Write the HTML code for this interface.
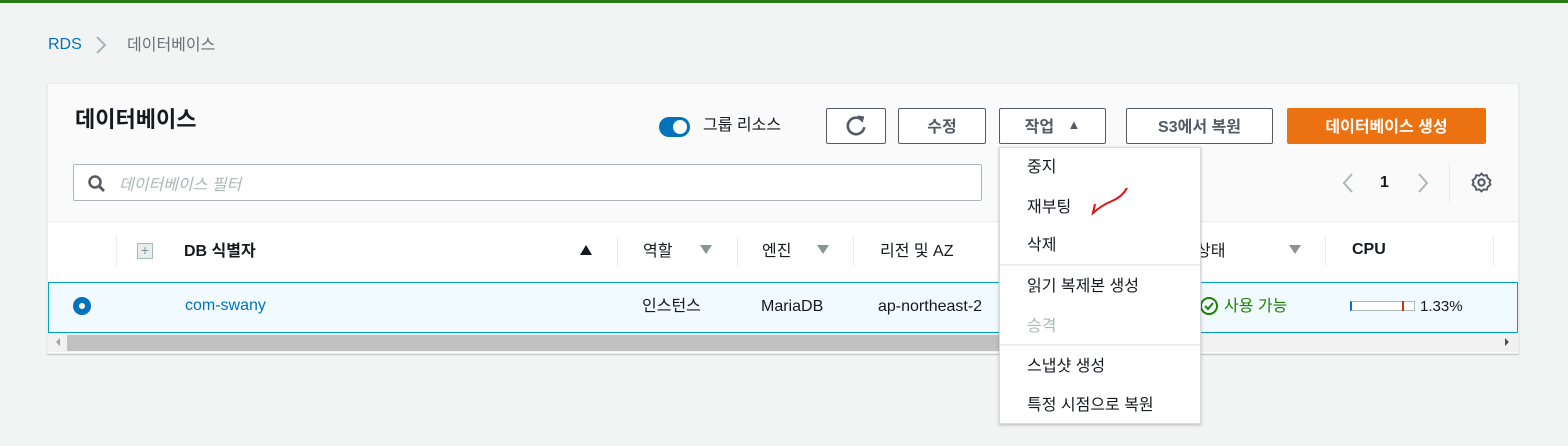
<!DOCTYPE html>
<html><head><meta charset="utf-8"><style>
*{margin:0;padding:0;box-sizing:border-box}
body{width:1568px;height:446px;background:#f2f3f3;font-family:"Liberation Sans","Noto Sans CJK KR",sans-serif;position:relative;overflow:hidden;color:#16191f}
.a{position:absolute;white-space:nowrap}
.btn{position:absolute;top:108px;height:36px;border:1px solid #545b64;background:#fff;border-radius:2px;font-size:16px;font-weight:bold;color:#545b64;display:flex;align-items:center;justify-content:center;padding-bottom:3px}
.hd{font-size:16px;font-weight:bold;color:#16191f;top:237px}
.vl{position:absolute;width:1px;background:#eaeded;top:236px;height:30px}
.tri{position:absolute;top:245px;width:0;height:0;border-left:6px solid transparent;border-right:6px solid transparent;border-top:9px solid #879596}
.dd{font-size:16px;color:#16191f;left:1027px}
</style></head><body>
<div class="a" style="left:0;top:0;width:1568px;height:3px;background:#2d7a1b"></div>
<div class="a" style="left:48px;top:36px;font-size:16px;color:#0073bb">RDS</div>
<svg class="a" style="left:95px;top:36px" width="12" height="18"><path d="M2 1 L10 9 L2 17" fill="none" stroke="#aab7b8" stroke-width="2"/></svg>
<div class="a" style="left:127px;top:31px;font-size:16px;color:#687078">데이터베이스</div>

<div class="a" style="left:47px;top:83px;width:1472px;height:271px;background:#fafafa;border:1px solid #eaeded;box-shadow:0 1px 1px rgba(0,0,0,.2)"></div>
<div class="a" style="left:48px;top:221px;width:1470px;height:1px;background:#eaeded"></div>
<div class="a" style="left:48px;top:222px;width:1470px;height:60px;background:#fff"></div>
<div class="a" style="left:75px;top:102px;font-size:22px;font-weight:bold">데이터베이스</div>
<div class="a" style="left:659px;top:117px;width:31px;height:20px;border-radius:10px;background:#0073bb"></div>
<div class="a" style="left:673px;top:120px;width:14px;height:14px;border-radius:7px;background:#fff"></div>
<div class="a" style="left:703px;top:111px;font-size:16px;color:#16191f">그룹 리소스</div>
<div class="btn" style="left:826px;width:60px;padding-bottom:0"><svg width="24" height="26" viewBox="0 0 20 22"><path d="M15.5 6.5 A7 7 0 1 0 17 12" fill="none" stroke="#545b64" stroke-width="2.2"/><path d="M11 2 L17 3 L15.5 8.5 Z" fill="#545b64"/></svg></div>
<div class="btn" style="left:898px;width:88px">수정</div>
<div class="btn" style="left:999px;width:107px">작업&nbsp;&nbsp;&nbsp;<span style="font-size:13px">▲</span></div>
<div class="btn" style="left:1126px;width:147px">S3에서 복원</div>
<div class="btn" style="left:1287px;width:199px;background:#ec7211;border-color:#ec7211;color:#fff">데이터베이스 생성</div>

<div class="a" style="left:73px;top:164px;width:909px;height:37px;background:#fff;border:1px solid #aab7b8;border-radius:2px"></div>
<svg class="a" style="left:87px;top:174px" width="20" height="20"><circle cx="8" cy="8" r="5.5" fill="none" stroke="#545b64" stroke-width="2.5"/><path d="M12 12 L17 17" stroke="#545b64" stroke-width="2.8"/></svg>
<div class="a" style="left:119px;top:171px;font-size:16px;color:#aab7b8;font-style:italic">데이터베이스 필터</div>

<svg class="a" style="left:1341px;top:172px" width="14" height="22"><path d="M11 2 L3 11 L11 20" fill="none" stroke="#aab7b8" stroke-width="2"/></svg>
<div class="a" style="left:1380px;top:174px;font-size:16px;font-weight:bold">1</div>
<svg class="a" style="left:1416px;top:172px" width="14" height="22"><path d="M3 2 L11 11 L3 20" fill="none" stroke="#aab7b8" stroke-width="2"/></svg>
<div class="a" style="left:1449px;top:163px;width:1px;height:40px;background:#eaeded"></div>
<svg class="a" style="left:1471px;top:172px" width="21" height="21" viewBox="0 0 20 20"><circle cx="10" cy="10" r="3" fill="none" stroke="#545b64" stroke-width="2"/><path d="M10 1.5 L12 3.5 L15 3 L16 6 L18.5 8 L17.5 10 L18.5 12 L16 14 L15 17 L12 16.5 L10 18.5 L8 16.5 L5 17 L4 14 L1.5 12 L2.5 10 L1.5 8 L4 6 L5 3 L8 3.5 Z" fill="none" stroke="#545b64" stroke-width="1.8"/></svg>

<div class="vl" style="left:116px"></div>
<div class="a" style="left:137px;top:243px;width:16px;height:16px;border:1px solid #aab7b8;background:#eaeded;font-size:14px;color:#879596;line-height:13px;text-align:center">+</div>
<div class="a hd" style="left:184px">DB 식별자</div>
<div class="a" style="left:580px;top:245px;width:0;height:0;border-left:6px solid transparent;border-right:6px solid transparent;border-bottom:10px solid #16191f"></div>
<div class="vl" style="left:617px"></div>
<div class="a hd" style="left:643px;font-weight:normal">역할</div><div class="tri" style="left:700px"></div>
<div class="vl" style="left:737px"></div>
<div class="a hd" style="left:762px;font-weight:normal">엔진</div><div class="tri" style="left:817px"></div>
<div class="vl" style="left:853px"></div>
<div class="a hd" style="left:880px;font-weight:normal">리전 및 AZ</div>
<div class="a hd" style="left:1196px;font-weight:normal">상태</div><div class="tri" style="left:1289px"></div>
<div class="vl" style="left:1325px"></div>
<div class="a hd" style="left:1352px;top:241px">CPU</div>
<div class="vl" style="left:1493px"></div>

<div class="a" style="left:48px;top:282px;width:1470px;height:51px;background:#f1faff;border:1px solid #00a1c9"></div>
<div class="a" style="left:73px;top:297px;width:18px;height:18px;border-radius:9px;background:#0073bb"></div>
<div class="a" style="left:79px;top:303px;width:6px;height:6px;border-radius:3px;background:#fff"></div>
<div class="a" style="left:185px;top:297px;font-size:16px;color:#0073bb">com-swany</div>
<div class="a" style="left:642px;top:292px;font-size:16px">인스턴스</div>
<div class="a" style="left:761px;top:298px;font-size:16px">MariaDB</div>
<div class="a" style="left:878px;top:298px;font-size:16px">ap-northeast-2</div>
<svg class="a" style="left:1199px;top:296px" width="20" height="20"><circle cx="10" cy="10" r="8" fill="none" stroke="#1d8102" stroke-width="2"/><path d="M6 10 L9 13 L14 7" fill="none" stroke="#1d8102" stroke-width="2"/></svg>
<div class="a" style="left:1224px;top:292px;font-size:16px;color:#1d8102">사용 가능</div>
<div class="a" style="left:1350px;top:301px;width:65px;height:10px;border:1px solid #aab7b8;border-left:2px solid #0073bb;background:#fff"></div>
<div class="a" style="left:1402px;top:301px;width:2px;height:10px;background:#d13212"></div>
<div class="a" style="left:1420px;top:298px;font-size:15px">1.33%</div>

<div class="a" style="left:48px;top:333px;width:1470px;height:19px;background:#f1f1f1"></div>
<div class="a" style="left:67px;top:335px;width:935px;height:16px;background:#c1c1c1"></div>
<div class="a" style="left:56px;top:338px;width:0;height:0;border-top:4px solid transparent;border-bottom:4px solid transparent;border-right:4px solid #a3a3a3"></div>
<div class="a" style="left:1505px;top:338px;width:0;height:0;border-top:4px solid transparent;border-bottom:4px solid transparent;border-left:4px solid #505050"></div>

<div class="a" style="left:999px;top:147px;width:202px;height:277px;background:#fff;border:1px solid #d5dbdb;box-shadow:0 1px 3px rgba(0,0,0,.25)"></div>
<div class="a dd" style="top:153px">중지</div>
<div class="a dd" style="top:193px">재부팅</div>
<svg class="a" style="left:1088px;top:184px" width="44" height="34"><path d="M7 20 L5 29 Q14 21 24 17 Q34 13 39 4" fill="none" stroke="#e01010" stroke-width="2"/></svg>
<div class="a dd" style="top:231px">삭제</div>
<div class="a" style="left:1000px;top:264px;width:200px;height:2px;background:#eaeded"></div>
<div class="a dd" style="top:272px">읽기 복제본 생성</div>
<div class="a dd" style="top:312px;color:#aab7b8">승격</div>
<div class="a" style="left:1000px;top:344px;width:200px;height:2px;background:#eaeded"></div>
<div class="a dd" style="top:352px">스냅샷 생성</div>
<div class="a dd" style="top:391px">특정 시점으로 복원</div>
</body></html>
